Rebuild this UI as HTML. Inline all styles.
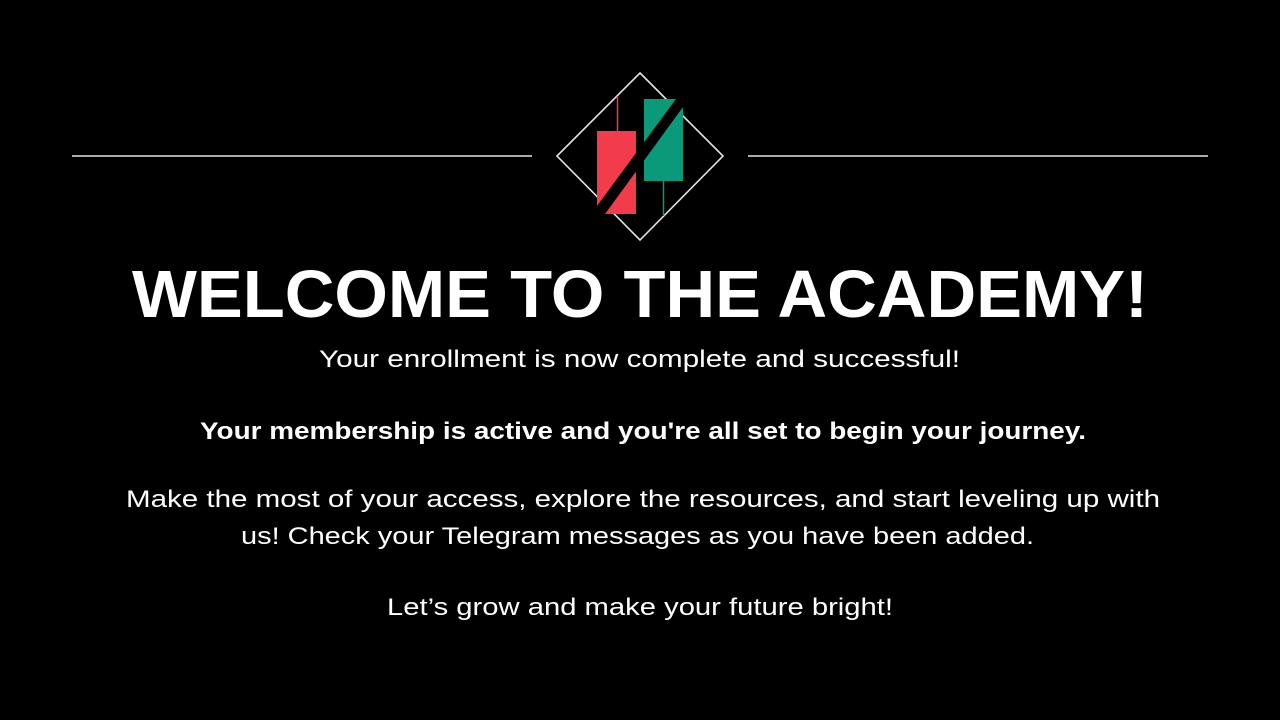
<!DOCTYPE html>
<html><head><meta charset="utf-8"><style>
html,body{margin:0;padding:0;background:#000;width:1280px;height:720px;overflow:hidden}
svg{display:block}
</style></head><body>
<svg width="1280" height="720" viewBox="0 0 1280 720" xmlns="http://www.w3.org/2000/svg">
<rect width="1280" height="720" fill="#000"/>
<line x1="72" y1="156" x2="532" y2="156" stroke="#e6e6e6" stroke-width="1.5"/>
<line x1="748" y1="156" x2="1208" y2="156" stroke="#e6e6e6" stroke-width="1.5"/>
<polygon points="640,73 723,156 640,240 557,156" fill="none" stroke="#e6e6e6" stroke-width="1.6"/>
<line x1="617.5" y1="96" x2="617.5" y2="131" stroke="#f23b4b" stroke-width="1.5"/>
<rect x="597" y="131" width="39" height="83" fill="#f23b4b"/>
<line x1="663.5" y1="181" x2="663.5" y2="216" stroke="#0a9a7a" stroke-width="1.5"/>
<rect x="644" y="99" width="39" height="82" fill="#0a9a7a"/>
<polygon points="597,206 676,99 683,99 683,107 605,214 597,214" fill="#000"/>
<g fill="#fff" font-family="Liberation Sans, sans-serif">
<text x="132" y="317" font-size="67" font-weight="bold" textLength="1016" lengthAdjust="spacingAndGlyphs">WELCOME TO THE ACADEMY!</text>
<text x="319" y="367" font-size="24" textLength="641" lengthAdjust="spacingAndGlyphs">Your enrollment is now complete and successful!</text>
<text x="200" y="439" font-size="24" font-weight="bold" textLength="886" lengthAdjust="spacingAndGlyphs">Your membership is active and you're all set to begin your journey.</text>
<text x="126" y="507" font-size="24" textLength="1034" lengthAdjust="spacingAndGlyphs">Make the most of your access, explore the resources, and start leveling up with</text>
<text x="241" y="544" font-size="24" textLength="793" lengthAdjust="spacingAndGlyphs">us! Check your Telegram messages as you have been added.</text>
<text x="387" y="615" font-size="24" textLength="506" lengthAdjust="spacingAndGlyphs">Let’s grow and make your future bright!</text>
</g>
</svg>
</body></html>
